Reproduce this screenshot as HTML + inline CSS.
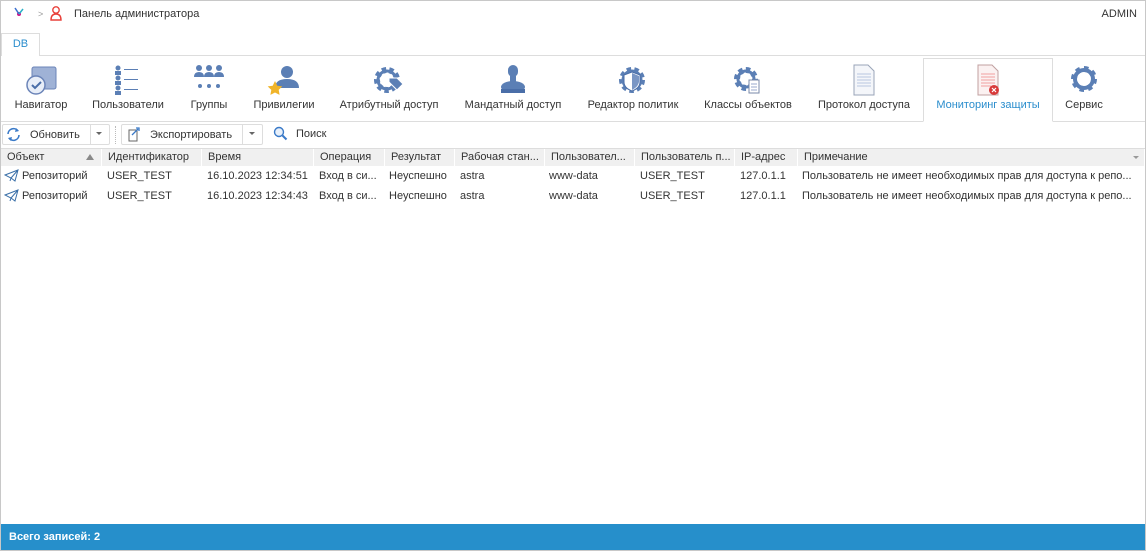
<!DOCTYPE html>
<html><head><meta charset="utf-8"><style>
*{box-sizing:border-box;margin:0;padding:0}
body{width:1146px;height:551px;overflow:hidden;font-family:"Liberation Sans",sans-serif;font-size:11px;color:#333;background:#fff;position:relative}
.frame{position:absolute;left:0;top:0;width:1146px;height:551px;border:1px solid #c8c8c8}
.a{position:absolute;white-space:nowrap}
.lbl{position:absolute;top:99px;white-space:nowrap;font-size:11px;color:#333;transform:translateX(-50%)}
.ic{position:absolute;top:64px;transform:translateX(-50%)}
.hd{position:absolute;top:149px;height:17px;line-height:17px;background:#f0f0f0;padding-left:6px;border-right:1px solid #fff;color:#333;overflow:hidden;white-space:nowrap}
.r{position:absolute;white-space:nowrap;color:#333}
</style></head><body>
<div class="frame"></div>
<svg class="a" style="left:12px;top:6px" width="14" height="14"><circle cx="7" cy="8" r="2" fill="#d0168a"/><line x1="3" y1="2" x2="7" y2="8" stroke="#3a6fd0" stroke-width="1.5"/><line x1="11" y1="3" x2="7" y2="8" stroke="#28b0c8" stroke-width="1.5"/></svg>
<div class="a" style="left:38px;top:9px;color:#999;font-size:9px">&gt;</div>
<svg class="a" style="left:50px;top:5px" width="12" height="16"><circle cx="6" cy="5" r="3.2" fill="none" stroke="#e8403a" stroke-width="1.4"/><path d="M1 15 Q1 9 6 9 Q11 9 11 15 Z" fill="none" stroke="#e8403a" stroke-width="1.4"/></svg>
<div class="a" style="left:74px;top:8px;font-size:11px">Панель администратора</div>
<div class="a" style="right:9px;top:8px;font-size:11px">ADMIN</div>
<div class="a" style="left:1px;top:55px;width:1144px;border-top:1px solid #ddd"></div>
<div class="a" style="left:1px;top:33px;width:39px;height:23px;background:#fff;border:1px solid #ddd;border-bottom:none;color:#2a8dcd;text-align:center;line-height:21px;font-size:11px">DB</div>
<div class="a" style="left:1px;top:121px;width:1144px;border-top:1px solid #ddd"></div>
<div class="a" style="left:923px;top:58px;width:130px;height:64px;background:#fff;border:1px solid #ddd;border-bottom:1px solid #fff"></div>
<svg class="ic" style="left:41px" width="34" height="32"><rect x="8" y="3" width="24" height="22" rx="2" fill="#9fb2d6" stroke="#6b84b8"/><circle cx="12" cy="21" r="9" fill="#e8eef8" stroke="#6b84b8" stroke-width="1.5"/><path d="M8 21 l3 3 l6-6" fill="none" stroke="#4a6ea8" stroke-width="2"/></svg>
<svg class="ic" style="left:128px" width="30" height="32"><g fill="#5b7fb5"><circle cx="5" cy="4" r="2.5"/><rect x="2" y="7" width="6" height="4"/><circle cx="5" cy="14" r="2.5"/><rect x="2" y="17" width="6" height="4"/><circle cx="5" cy="24" r="2.5"/><rect x="2" y="27" width="6" height="4"/><rect x="11" y="5" width="14" height="1"/><rect x="11" y="15" width="14" height="1"/><rect x="11" y="25" width="14" height="1"/></g></svg>
<svg class="ic" style="left:209px" width="32" height="32"><g fill="#5b7fb5"><circle cx="6" cy="4" r="3"/><path d="M1 13 q0-5 5-5 q5 0 5 5z"/><circle cx="16" cy="4" r="3"/><path d="M11 13 q0-5 5-5 q5 0 5 5z"/><circle cx="26" cy="4" r="3"/><path d="M21 13 q0-5 5-5 q5 0 5 5z"/><circle cx="7" cy="22" r="2"/><circle cx="16" cy="22" r="2"/><circle cx="25" cy="22" r="2"/></g></svg>
<svg class="ic" style="left:284px" width="34" height="34"><circle cx="20" cy="8" r="6" fill="#5b7fb5"/><path d="M8 24 q0-9 12-9 q12 0 12 9z" fill="#5b7fb5"/><path d="M8 17 l2.3 4.7 5 .7 -3.6 3.5 .9 5 -4.6-2.4 -4.6 2.4 .9-5 -3.6-3.5 5-.7z" fill="#f0b429"/></svg>
<svg class="ic" style="left:389px" width="32" height="32"><circle cx="14" cy="16" r="10" fill="none" stroke="#5b7fb5" stroke-width="6" stroke-dasharray="4 3"/><circle cx="14" cy="16" r="9" fill="none" stroke="#5b7fb5" stroke-width="3"/><path d="M16 14 l8 0 l6 6 l-6 6 l-8-8z" fill="#5b7fb5" stroke="#fff"/></svg>
<svg class="ic" style="left:513px" width="30" height="32"><rect x="10" y="1" width="10" height="12" rx="5" fill="#5b7fb5"/><rect x="12" y="12" width="6" height="6" fill="#5b7fb5"/><ellipse cx="15" cy="23" rx="12" ry="6" fill="#5b7fb5"/><rect x="3" y="25" width="24" height="4" fill="#4a6ea8"/></svg>
<svg class="ic" style="left:633px" width="30" height="32"><circle cx="14" cy="16" r="10" fill="none" stroke="#5b7fb5" stroke-width="6" stroke-dasharray="4 3"/><circle cx="14" cy="16" r="9" fill="none" stroke="#5b7fb5" stroke-width="3"/><path d="M14 8 l8 3 v7 q0 6-8 9 q-8-3-8-9 v-7z" fill="#fff" stroke="#4a6ea8"/><path d="M14 9 v17 q6-3 7-8 v-6z" fill="#7a96c4"/></svg>
<svg class="ic" style="left:748px" width="30" height="32"><circle cx="13" cy="15" r="9" fill="none" stroke="#5b7fb5" stroke-width="6" stroke-dasharray="4 3"/><circle cx="13" cy="15" r="8" fill="none" stroke="#5b7fb5" stroke-width="3"/><rect x="16" y="16" width="10" height="13" fill="#fff" stroke="#7a8aa8"/><path d="M18 20h6M18 23h6M18 26h6" stroke="#9aaacc"/></svg>
<svg class="ic" style="left:864px" width="26" height="32"><path d="M3 1 h14 l6 6 v24 h-20z" fill="#f4f6fa" stroke="#9aa4b8"/><path d="M6 10h14M6 13h14M6 16h14M6 19h14M6 22h14" stroke="#b8c6e0"/></svg>
<svg class="ic" style="left:988px" width="26" height="32"><path d="M3 1 h14 l6 6 v24 h-20z" fill="#fbf1f1" stroke="#c0a0a0"/><path d="M6 10h14M6 13h14M6 16h14M6 19h14M6 22h10" stroke="#f0a0a0"/><circle cx="19" cy="26" r="5" fill="#d83a3a"/><path d="M17 24l4 4M21 24l-4 4" stroke="#fff" stroke-width="1.2"/></svg>
<svg class="ic" style="left:1084px" width="30" height="32"><circle cx="15" cy="15" r="10" fill="none" stroke="#5b7fb5" stroke-width="6" stroke-dasharray="4 3.8"/><circle cx="15" cy="15" r="9" fill="none" stroke="#5b7fb5" stroke-width="4"/></svg>
<div class="lbl" style="left:41px">Навигатор</div>
<div class="lbl" style="left:128px">Пользователи</div>
<div class="lbl" style="left:209px">Группы</div>
<div class="lbl" style="left:284px">Привилегии</div>
<div class="lbl" style="left:389px">Атрибутный доступ</div>
<div class="lbl" style="left:513px">Мандатный доступ</div>
<div class="lbl" style="left:633px">Редактор политик</div>
<div class="lbl" style="left:748px">Классы объектов</div>
<div class="lbl" style="left:864px">Протокол доступа</div>
<div class="lbl" style="left:988px;color:#2a8dcd">Мониторинг защиты</div>
<div class="lbl" style="left:1084px">Сервис</div>
<div class="a" style="left:2px;top:124px;width:108px;height:21px;border:1px solid #ddd;border-radius:2px"></div>
<div class="a" style="left:90px;top:125px;height:19px;border-left:1px solid #ddd"></div>
<svg class="a" style="left:6px;top:127px" width="15" height="15"><path d="M2 7 a5.5 5.5 0 0 1 10-3" fill="none" stroke="#3a7ac8" stroke-width="1.6"/><path d="M13 8 a5.5 5.5 0 0 1 -10 3" fill="none" stroke="#3a7ac8" stroke-width="1.6"/><path d="M10 1 l3 3 l-4 1z M5 14 l-3-3 l4-1z" fill="#3a7ac8"/></svg>
<div class="a" style="left:30px;top:129px">Обновить</div>
<div class="a" style="left:96px;top:132px;border:3px solid transparent;border-top:3px solid #666"></div>
<div class="a" style="left:115px;top:126px;height:18px;border-left:1px dotted #bbb"></div>
<div class="a" style="left:121px;top:124px;width:142px;height:21px;border:1px solid #ddd;border-radius:2px"></div>
<div class="a" style="left:242px;top:125px;height:19px;border-left:1px solid #ddd"></div>
<svg class="a" style="left:127px;top:126px" width="15" height="16"><path d="M2 4 h8 v11 h-8z" fill="#fff" stroke="#666"/><path d="M5 9 l6-6 M9 2 h3 v3" fill="none" stroke="#3a7ac8" stroke-width="1.3"/></svg>
<div class="a" style="left:150px;top:129px">Экспортировать</div>
<div class="a" style="left:249px;top:132px;border:3px solid transparent;border-top:3px solid #666"></div>
<svg class="a" style="left:273px;top:126px" width="15" height="15"><circle cx="6" cy="6" r="4.5" fill="#e8f0fa" stroke="#3a7ac8" stroke-width="1.4"/><path d="M9.5 9.5 l4 4" stroke="#3a7ac8" stroke-width="2"/></svg>
<div class="a" style="left:296px;top:128px">Поиск</div>
<div class="a" style="left:1px;top:148px;width:1144px;border-top:1px solid #ddd"></div>
<div class="hd" style="left:1px;width:101px">Объект</div>
<div class="a" style="left:86px;top:154px;border:4px solid transparent;border-bottom:6px solid #888;border-top:none"></div>
<div class="hd" style="left:102px;width:100px">Идентификатор</div>
<div class="hd" style="left:202px;width:112px">Время</div>
<div class="hd" style="left:314px;width:71px">Операция</div>
<div class="hd" style="left:385px;width:70px">Результат</div>
<div class="hd" style="left:455px;width:90px">Рабочая стан...</div>
<div class="hd" style="left:545px;width:90px">Пользовател...</div>
<div class="hd" style="left:635px;width:100px">Пользователь п...</div>
<div class="hd" style="left:735px;width:63px">IP-адрес</div>
<div class="hd" style="left:798px;width:347px">Примечание</div>
<div class="a" style="left:1133px;top:156px;border:3px solid transparent;border-top:3px solid #999"></div>
<svg class="a" style="left:4px;top:169px" width="15" height="13"><path d="M1 6 l13-5 l-3 11 l-4-3 z M7 9 l-1 3 M14 1 l-7 8" fill="#fff" stroke="#3a6fa8"/></svg>
<svg class="a" style="left:4px;top:189px" width="15" height="13"><path d="M1 6 l13-5 l-3 11 l-4-3 z M7 9 l-1 3 M14 1 l-7 8" fill="#fff" stroke="#3a6fa8"/></svg>
<div class="r" style="left:22px;top:170px">Репозиторий</div><div class="r" style="left:22px;top:190px">Репозиторий</div>
<div class="r" style="left:107px;top:170px">USER_TEST</div><div class="r" style="left:107px;top:190px">USER_TEST</div>
<div class="r" style="left:207px;top:170px">16.10.2023 12:34:51</div><div class="r" style="left:207px;top:190px">16.10.2023 12:34:43</div>
<div class="r" style="left:319px;top:170px">Вход в си...</div><div class="r" style="left:319px;top:190px">Вход в си...</div>
<div class="r" style="left:389px;top:170px">Неуспешно</div><div class="r" style="left:389px;top:190px">Неуспешно</div>
<div class="r" style="left:460px;top:170px">astra</div><div class="r" style="left:460px;top:190px">astra</div>
<div class="r" style="left:549px;top:170px">www-data</div><div class="r" style="left:549px;top:190px">www-data</div>
<div class="r" style="left:640px;top:170px">USER_TEST</div><div class="r" style="left:640px;top:190px">USER_TEST</div>
<div class="r" style="left:740px;top:170px">127.0.1.1</div><div class="r" style="left:740px;top:190px">127.0.1.1</div>
<div class="r" style="left:802px;top:170px">Пользователь не имеет необходимых прав для доступа к репо...</div>
<div class="r" style="left:802px;top:190px">Пользователь не имеет необходимых прав для доступа к репо...</div>
<div class="a" style="left:1px;top:524px;width:1144px;height:26px;background:#268fcb;color:#fff;font-weight:bold;line-height:27px;padding-left:8px;font-size:11px">Всего записей: 2</div>
</body></html>
